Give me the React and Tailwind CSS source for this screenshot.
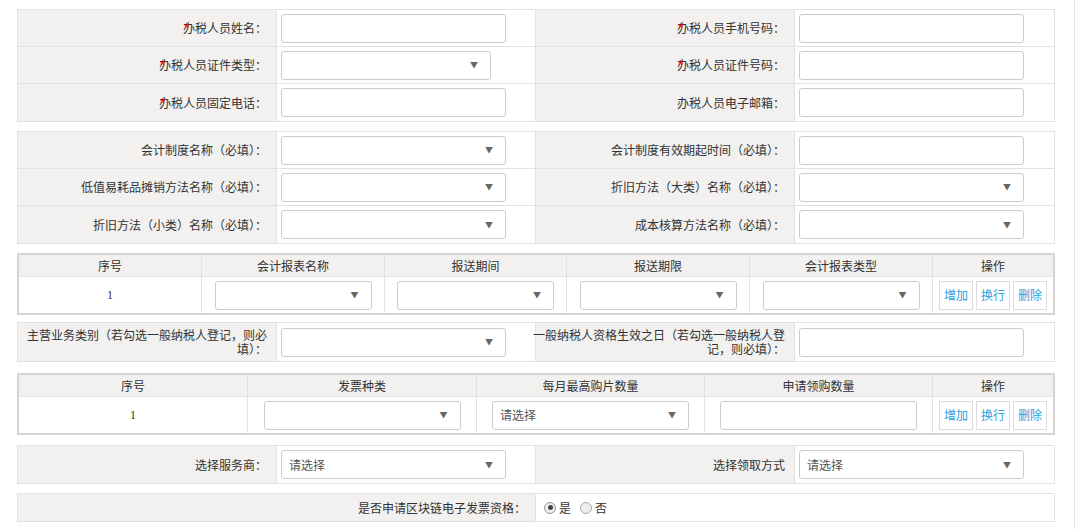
import React from "react";

const FONT = { fontFamily: '"Noto Sans CJK SC", "Liberation Sans", sans-serif' };

function StarChar({ ch }) {
  return (
    <span className="relative">
      {ch}
      <span
        className="absolute left-[1px] top-[2px] text-[14px] leading-none text-[#ff0000]"
        style={{ fontFamily: '"Liberation Sans", sans-serif' }}
      >
        *
      </span>
    </span>
  );
}

function TextInput({ w = "w-[225px]" }) {
  return <div className={`${w} h-[29px] rounded-[3px] border border-[#cccccc] bg-white`} />;
}

function Select({ w = "w-[225px]", placeholder = "" }) {
  return (
    <div className={`${w} h-[29px] rounded-[3px] border border-[#cccccc] bg-white flex items-center justify-between pl-[7px] pr-[12px]`}>
      <span className="text-[12px] text-[#555]">{placeholder}</span>
      <span className="text-[8px] text-[#666] leading-none">▼</span>
    </div>
  );
}

function Label({ children, req }) {
  let content = children;
  if (req && typeof children === "string") {
    content = (
      <>
        <StarChar ch={children[0]} />
        {children.slice(1)}
      </>
    );
  }
  return (
    <div className="bg-[#f2f1ef] flex items-center justify-end pr-[9px] pl-[4px] text-right text-[12px] leading-[14px] text-[#333] border-r border-[#e2e2e2] whitespace-nowrap">
      <span>{content}</span>
    </div>
  );
}

function Field({ children, last }) {
  return (
    <div className={`bg-white flex items-center pl-[4px] ${last ? "" : "border-r border-[#e2e2e2]"}`}>{children}</div>
  );
}

function Row({ h = "h-[37px]", cells }) {
  return <div className={`grid grid-cols-4 ${h}`}>{cells}</div>;
}

function Section({ children, className = "" }) {
  return (
    <div className={`border border-[#e2e2e2] divide-y divide-[#e2e2e2] ${className}`}>{children}</div>
  );
}

function OpButtons() {
  return (
    <div className="flex gap-[3px]">
      {["增加", "换行", "删除"].map((t) => (
        <div
          key={t}
          className="w-[34px] h-[29px] border border-[#dddddd] bg-white flex items-center justify-center text-[12px] text-[#2a9fe0]"
        >
          {t}
        </div>
      ))}
    </div>
  );
}

export default function App() {
  return (
    <div style={FONT} className="w-[1075px] min-h-[529px] border-r border-[#e0e0e0] bg-white pl-[17px] pr-[19px] pt-[9px] text-[#333]">
      {/* Section 1 */}
      <Section>
        <Row
          cells={
            <>
              <Label req>办税人员姓名：</Label>
              <Field><TextInput /></Field>
              <Label req>办税人员手机号码：</Label>
              <Field last><TextInput /></Field>
            </>
          }
        />
        <Row
          cells={
            <>
              <Label req>办税人员证件类型：</Label>
              <Field><Select w="w-[210px]" /></Field>
              <Label req>办税人员证件号码：</Label>
              <Field last><TextInput /></Field>
            </>
          }
        />
        <Row
          cells={
            <>
              <Label req>办税人员固定电话：</Label>
              <Field><TextInput /></Field>
              <Label>办税人员电子邮箱：</Label>
              <Field last><TextInput /></Field>
            </>
          }
        />
      </Section>

      {/* Section 2 */}
      <Section className="mt-[9px]">
        <Row
          cells={
            <>
              <Label>会计制度名称（必填）：</Label>
              <Field><Select /></Field>
              <Label>会计制度有效期起时间（必填）：</Label>
              <Field last><TextInput /></Field>
            </>
          }
        />
        <Row
          cells={
            <>
              <Label>低值易耗品摊销方法名称（必填）：</Label>
              <Field><Select /></Field>
              <Label>折旧方法（大类）名称（必填）：</Label>
              <Field last><Select /></Field>
            </>
          }
        />
        <Row
          cells={
            <>
              <Label>折旧方法（小类）名称（必填）：</Label>
              <Field><Select /></Field>
              <Label>成本核算方法名称（必填）：</Label>
              <Field last><Select /></Field>
            </>
          }
        />
      </Section>

      {/* Table 1 */}
      <div className="mt-[9px] border-2 border-[#d5d5d5] text-[12px]">
        <div className="grid grid-cols-[183px_183px_182px_183px_183px_1fr] h-[22px] bg-[#f2f1ef] border-b border-[#e2e2e2]">
          {["序号", "会计报表名称", "报送期间", "报送期限", "会计报表类型", "操作"].map((t, i) => (
            <div key={t} className={`flex items-center justify-center ${i < 5 ? "border-r border-[#e2e2e2]" : ""}`}>{t}</div>
          ))}
        </div>
        <div className="grid grid-cols-[183px_183px_182px_183px_183px_1fr] h-[36px] bg-white">
          <div className="flex items-center justify-center border-r border-[#e2e2e2]" style={{ fontFamily: '"Liberation Serif", serif' }}>1</div>
          {[0, 1, 2, 3].map((i) => (
            <div key={i} className="flex items-center justify-center border-r border-[#e2e2e2]">
              <Select w="w-[157px]" />
            </div>
          ))}
          <div className="flex items-center justify-center"><OpButtons /></div>
        </div>
      </div>

      {/* Section 3 */}
      <Section className="mt-[7px]">
        <Row
          h="h-[38px]"
          cells={
            <>
              <Label>主营业务类别（若勾选一般纳税人登记，则必<br />填）：</Label>
              <Field><Select /></Field>
              <Label>一般纳税人资格生效之日（若勾选一般纳税人登<br />记，则必填）：</Label>
              <Field last><TextInput /></Field>
            </>
          }
        />
      </Section>

      {/* Table 2 */}
      <div className="mt-[11px] border-2 border-[#d5d5d5] text-[12px]">
        <div className="grid grid-cols-[229px_229px_228px_228px_1fr] h-[22px] bg-[#f2f1ef] border-b border-[#e2e2e2]">
          {["序号", "发票种类", "每月最高购片数量", "申请领购数量", "操作"].map((t, i) => (
            <div key={t} className={`flex items-center justify-center ${i < 4 ? "border-r border-[#e2e2e2]" : ""}`}>{t}</div>
          ))}
        </div>
        <div className="grid grid-cols-[229px_229px_228px_228px_1fr] h-[36px] bg-white">
          <div className="flex items-center justify-center border-r border-[#e2e2e2]" style={{ fontFamily: '"Liberation Serif", serif' }}>1</div>
          <div className="flex items-center justify-center border-r border-[#e2e2e2]"><Select w="w-[197px]" /></div>
          <div className="flex items-center justify-center border-r border-[#e2e2e2]"><Select w="w-[197px]" placeholder="请选择" /></div>
          <div className="flex items-center justify-center border-r border-[#e2e2e2]"><TextInput w="w-[197px]" /></div>
          <div className="flex items-center justify-center"><OpButtons /></div>
        </div>
      </div>

      {/* Section 4 */}
      <Section className="mt-[10px]">
        <Row
          h="h-[37px]"
          cells={
            <>
              <Label>选择服务商：</Label>
              <Field><Select placeholder="请选择" /></Field>
              <Label>选择领取方式</Label>
              <Field last><Select placeholder="请选择" /></Field>
            </>
          }
        />
      </Section>

      {/* Section 5 */}
      <Section className="mt-[9px]">
        <div className="grid grid-cols-2 h-[27px]">
          <div className="bg-[#f2f1ef] flex items-center justify-end pr-[9px] text-[12px] border-r border-[#e2e2e2]">是否申请区块链电子发票资格：</div>
          <div className="bg-white flex items-center pl-[8px] text-[12px] gap-[3px]">
            <span className="w-[12px] h-[12px] rounded-full border border-[#999] bg-[#eee] flex items-center justify-center">
              <span className="w-[5px] h-[5px] rounded-full bg-[#444]" />
            </span>
            <span>是</span>
            <span className="ml-[6px] w-[12px] h-[12px] rounded-full border border-[#aaa] bg-[#eee]" />
            <span>否</span>
          </div>
        </div>
      </Section>
    </div>
  );
}
